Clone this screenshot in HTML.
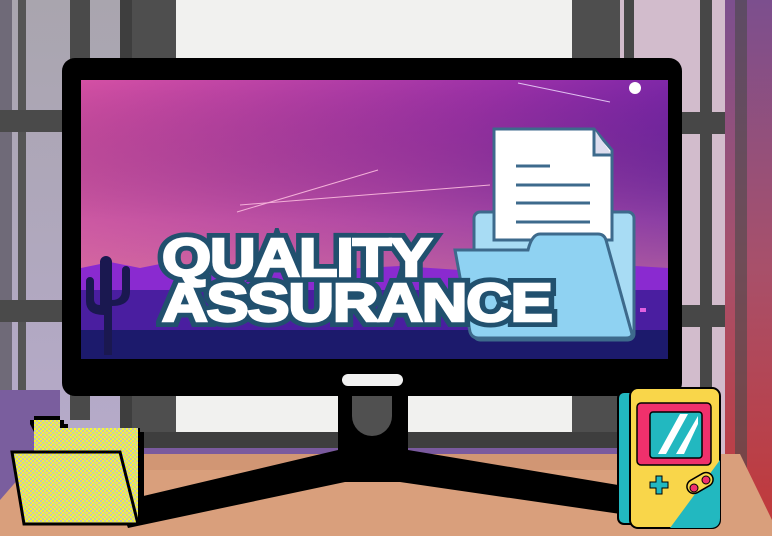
<!DOCTYPE html>
<html><head><style>
*{margin:0;padding:0}
body{width:772px;height:536px;overflow:hidden;position:relative;background:#b3aabd;font-family:"Liberation Sans",sans-serif}
.a{position:absolute}
.t{position:absolute;left:162px;top:236px;font-size:54px;font-weight:bold;line-height:45px;letter-spacing:-1px;transform:scaleX(1.17);transform-origin:0 0;white-space:nowrap}
</style></head><body>
<svg class="a" style="left:0;top:0" width="772" height="536">
<defs>
<linearGradient id="rw" x1="0" y1="0" x2="0" y2="1"><stop offset="0" stop-color="#7c4f8e"/><stop offset=".5" stop-color="#a8506a"/><stop offset="1" stop-color="#c23838"/></linearGradient>
<linearGradient id="sky" x1="0" y1="0" x2="1" y2="0.6"><stop offset="0" stop-color="#d450a4"/><stop offset=".55" stop-color="#9a30a8"/><stop offset="1" stop-color="#5a1ca8"/></linearGradient>
<linearGradient id="sky2" x1="0" y1="0" x2="0" y2="1"><stop offset="0" stop-color="#000" stop-opacity="0"/><stop offset=".5" stop-color="#f08a9a" stop-opacity=".3"/><stop offset="1" stop-color="#f6909a" stop-opacity=".9"/></linearGradient>
<linearGradient id="lw" x1="0" y1="0" x2="0" y2="1"><stop offset="0" stop-color="#a9a5ae"/><stop offset="1" stop-color="#b6aacb"/></linearGradient>
<pattern id="chk" width="4" height="4" patternUnits="userSpaceOnUse"><rect width="4" height="4" fill="#f4f43a"/><rect width="2" height="2" fill="#c8c8b0"/><rect x="2" y="2" width="2" height="2" fill="#c8c8b0"/></pattern>
</defs>
<rect x="0" y="0" width="180" height="460" fill="url(#lw)"/>
<rect x="0" y="0" width="12" height="536" fill="#6f6a78"/>
<rect x="18" y="0" width="8" height="420" fill="#555"/>
<rect x="70" y="0" width="20" height="420" fill="#4a4a4a"/>
<rect x="120" y="0" width="12" height="440" fill="#3e3e3e"/>
<rect x="0" y="110" width="180" height="22" fill="#4a4a4a"/>
<rect x="0" y="300" width="180" height="22" fill="#4a4a4a"/>
<rect x="0" y="390" width="60" height="146" fill="#7a5e9e"/>
<rect x="132" y="0" width="50" height="445" fill="#4e4e4e"/>
<rect x="176" y="0" width="404" height="440" fill="#f1f1ef"/>
<rect x="572" y="0" width="50" height="445" fill="#4e4e4e"/>
<rect x="620" y="0" width="110" height="470" fill="#d2bccc"/>
<rect x="624" y="0" width="10" height="470" fill="#474747"/>
<rect x="700" y="0" width="12" height="470" fill="#474747"/>
<rect x="620" y="112" width="110" height="22" fill="#474747"/>
<rect x="620" y="305" width="110" height="22" fill="#474747"/>
<rect x="725" y="0" width="47" height="536" fill="url(#rw)"/>
<rect x="735" y="0" width="12" height="536" fill="#4a4a4a" opacity=".6"/>
<rect x="60" y="432" width="640" height="18" fill="#3e3e3e"/>
<rect x="60" y="448" width="640" height="6" fill="#7a5a9e"/>
<polygon points="40,454 740,454 772,520 772,536 0,536 0,500" fill="#d99f7c"/>
<polygon points="130,454 620,454 620,470 130,470" fill="#c98e6c" opacity=".5"/>
<rect x="338" y="392" width="70" height="70" fill="#000"/>
<path d="M352 396 V416 A20 20 0 0 0 392 416 V396 Z" fill="#505050"/>
<polygon points="118,502 338,450 408,450 648,490 648,518 400,482 345,482 128,528" fill="#000"/>
<rect x="62" y="58" width="620" height="338" rx="13" fill="#000"/>
<rect x="81" y="80" width="587" height="279" fill="url(#sky)"/>
<rect x="81" y="80" width="587" height="279" fill="url(#sky2)"/>
<path d="M81 268 L110 262 L140 268 L170 262 L210 268 L260 264 L320 270 L400 266 L460 270 L530 268 L600 264 L668 268 V359 H81Z" fill="#8a2ad0"/>
<path d="M81 290 L668 290 V359 H81Z" fill="#4a1ea0"/>
<path d="M81 330 H668 V359 H81Z" fill="#1c1a6c"/>
<path d="M100 330 V262 a6 6 0 0 1 12 0 V300 q10 0 10-10 v-20 a4 4 0 0 1 8 0 v22 q0 14-18 14 V330 V355 H104 V315 q-18 0-18-14 v-20 a4 4 0 0 1 8 0 v18 q0 6 6 6z" fill="#1a1850"/>
<line x1="237" y1="212" x2="378" y2="170" stroke="#f3b0d8" stroke-width="1"/>
<line x1="240" y1="205" x2="490" y2="185" stroke="#f3b0d8" stroke-width="1"/>
<line x1="518" y1="83" x2="610" y2="102" stroke="#e0c0f0" stroke-width="1"/>
<circle cx="635" cy="88" r="6" fill="#fff"/>
<rect x="474" y="212" width="160" height="128" rx="6" fill="#a8dcf4" stroke="#3d6a8c" stroke-width="3"/>
<path d="M494 129 H594 L612 150 V240 H494 Z" fill="#fff" stroke="#3d6a8c" stroke-width="3"/>
<path d="M594 129 V155 H612" fill="#dde" stroke="#3d6a8c" stroke-width="3"/>
<g stroke="#3d6a8c" stroke-width="3"><line x1="516" y1="166" x2="550" y2="166"/><line x1="516" y1="185" x2="590" y2="185"/><line x1="516" y1="203" x2="590" y2="203"/><line x1="516" y1="222" x2="590" y2="222"/></g>
<path d="M455 250 H528 Q532 234 540 234 H598 Q604 234 606 240 L632 334 Q632 338 626 338 H478 Q472 338 470 332 Z" fill="#8fd2f2" stroke="#3d6a8c" stroke-width="3"/>
<rect x="640" y="308" width="6" height="4" fill="#e060e0"/>
<rect x="342" y="374" width="61" height="12" rx="6" fill="#f2f2f2"/>
<path d="M30 424 V420 h4 v-4 h26 v4 h4 v4 h4 v4 h72 v4 h4 v88 h-4 v4 h-2 v-92 H34 Z" fill="#000"/>
<rect x="34" y="420" width="26" height="8" fill="url(#chk)"/>
<rect x="34" y="428" width="104" height="90" fill="url(#chk)"/>
<path d="M12 452 h108 l18 72 h-114 z" fill="url(#chk)" stroke="#000" stroke-width="3"/>
<rect x="618" y="392" width="34" height="132" rx="6" fill="#22b8c0" stroke="#000" stroke-width="2"/>
<rect x="630" y="388" width="90" height="140" rx="8" fill="#f9d64a" stroke="#000" stroke-width="2"/>
<path d="M720 460 L720 518 q0 10-10 10 H670 Z" fill="#22b8c0"/>
<rect x="637" y="403" width="74" height="62" rx="4" fill="#f0306c" stroke="#000" stroke-width="1.5"/>
<rect x="650" y="412" width="52" height="46" rx="3" fill="#22b8c0" stroke="#000" stroke-width="1.5"/>
<path d="M658 454 L680 414 H688 L666 454Z M676 454 L698 416 V424 L684 454Z" fill="#fff"/>
<path d="M650 482 h6 v-6 h6 v6 h6 v6 h-6 v6 h-6 v-6 h-6z" fill="#22b8c0" stroke="#000" stroke-width="1"/>
<rect x="686" y="476" width="28" height="14" rx="7" fill="#f9d64a" stroke="#000" stroke-width="1.5" transform="rotate(-30 700 483)"/>
<circle cx="694" cy="488" r="4" fill="#f0306c" stroke="#000"/><circle cx="706" cy="480" r="4" fill="#f0306c" stroke="#000"/>
</svg>
<div class="t" style="color:#21506e;-webkit-text-stroke:12px #21506e">QUALITY<br>ASSURANCE</div>
<div class="t" style="color:#fff;-webkit-text-stroke:2.5px #fff">QUALITY<br>ASSURANCE</div>
</body></html>
